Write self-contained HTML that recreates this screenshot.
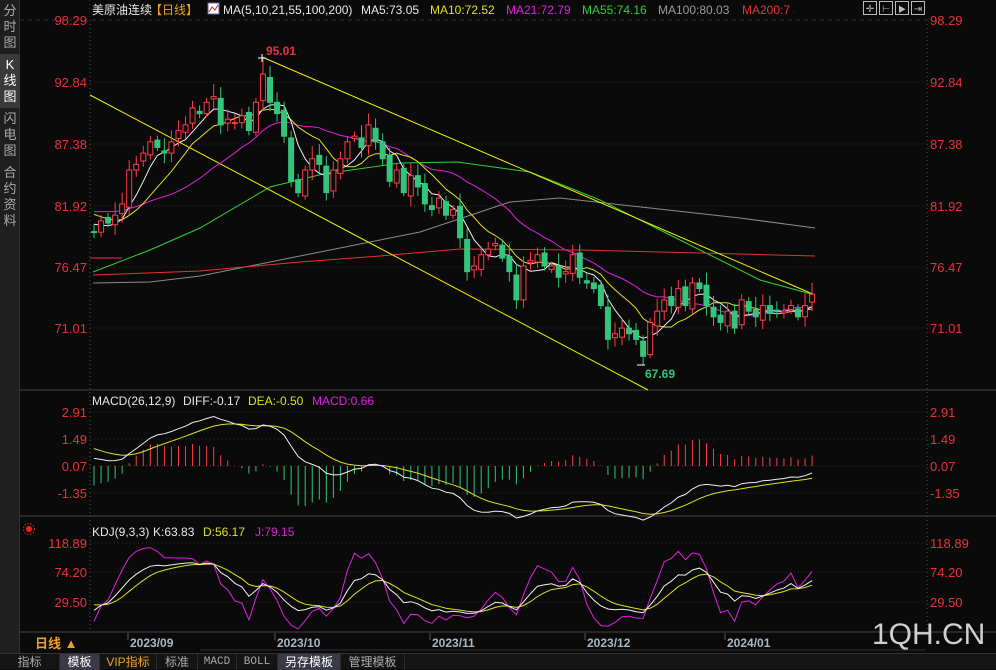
<!DOCTYPE html>
<html><head><meta charset="utf-8"><style>
*{margin:0;padding:0;box-sizing:border-box}
body{width:996px;height:669px;background:#0a0a0a;overflow:hidden;font-family:"Liberation Sans","Noto Sans CJK SC",sans-serif;position:relative}
.sb{position:absolute;left:0;top:0;width:20px;height:653px;background:#1e1e1e;border-right:1px solid #333}
.sb div{color:#aaa;font-size:13px;line-height:16px;text-align:center;width:20px;padding:3px 0}
.sb .on{background:#3a3a3a;color:#fff}
.tabs{position:absolute;left:0;top:653px;width:996px;height:16px;background:#141414;border-top:1px solid #333}
.tabs span{position:absolute;top:0;height:16px;font-size:12px;line-height:16px;text-align:center;color:#aaa;border-right:1px solid #2a2a2a}
svg{position:absolute;left:0;top:0}
</style></head><body>
<div class="sb"><div>分<br>时<br>图</div><div class="on">K<br>线<br>图</div><div>闪<br>电<br>图</div><div>合<br>约<br>资<br>料</div></div>
<svg id="s" width="996" height="653" viewBox="0 0 996 653" font-family="Liberation Sans, Noto Sans CJK SC, sans-serif"></svg>
<div class="tabs">
<span style="left:0;width:60px">指标</span>
<span style="left:60px;width:40px;background:#3a3a46;color:#fff">模板</span>
<span style="left:100px;width:57px;color:#f0a020">VIP指标</span>
<span style="left:157px;width:41px">标准</span>
<span style="left:198px;width:39px;font-family:'Liberation Mono',monospace;font-size:11px">MACD</span>
<span style="left:237px;width:41px;font-family:'Liberation Mono',monospace;font-size:11px">BOLL</span>
<span style="left:278px;width:63px;background:#3a3a46;color:#fff">另存模板</span>
<span style="left:341px;width:64px">管理模板</span>
</div>
<script>
var s=document.getElementById('s'),h='';
function L(x1,y1,x2,y2,c,d){h+='<line x1="'+x1+'" y1="'+y1+'" x2="'+x2+'" y2="'+y2+'" stroke="'+c+'" stroke-width="1"'+(d?' stroke-dasharray="'+d+'"':'')+'/>';}
function T(x,y,t,c,sz,a,w){h+='<text x="'+x+'" y="'+y+'" fill="'+c+'" font-size="'+(sz||12)+'"'+(a?' text-anchor="'+a+'"':'')+(w?' font-weight="bold"':'')+'>'+t+'</text>';}
function P(pts,c){h+='<polyline fill="none" stroke="'+c+'" stroke-width="1" points="'+pts.map(function(p){return p[0].toFixed(1)+','+p[1].toFixed(1)}).join(' ')+'"/>';}
L(90,0,90,632,'#555','1,3');L(927,20,927,632,'#555','1,3');
L(20,390,996,390,'#444');L(20,516,996,516,'#444');L(20,632,996,632,'#444');
L(20,20,927,20,'#333','4,4');
var R='#e8303a';
var pl=[[98.29,20],[92.84,82],[87.38,144],[81.92,206],[76.47,267],[71.01,328]];
pl.forEach(function(p){if(p[1]>20)L(90,p[1],927,p[1],'#333','1,3');T(87,p[1]+5,p[0].toFixed(2),R,13,'end');T(930,p[1]+5,p[0].toFixed(2),R,13);});
function py(p){return 20+(98.29-p)*11.29;}
var ml=[['2.91',412],['1.49',439],['0.07',466],['-1.35',493]];
ml.forEach(function(p){L(90,p[1],927,p[1],'#333','1,3');T(87,p[1]+5,p[0],R,13,'end');T(930,p[1]+5,p[0],R,13);});
var kl=[['118.89',543],['74.20',572],['29.50',602]];
kl.forEach(function(p){L(90,p[1],927,p[1],'#333','1,3');T(87,p[1]+5,p[0],R,13,'end');T(930,p[1]+5,p[0],R,13);});
var C=[79.5,80.5,80.3,81,82,85,85.5,86.5,87.5,87,86.5,87.5,88.5,89,90.5,90,91,91.5,89,89.5,89.2,89.8,88.5,91,93.5,91,90,88,84,83,85,86,85.5,83,85,86,87.5,88,87,89,87.5,86,84,85,83,84.5,83.5,82,81.5,82.5,81,81.5,79,76,76.5,77.5,78,78.5,77.2,76,73.5,76.5,77,77.5,76.5,76.5,75.5,76,77.5,75.5,75,74.5,73,70,70.5,71,70.5,70,68.5,71.5,72.5,73.5,73,74.5,73,75,74.5,73,72,71.5,72.5,71,73.5,72.5,72,73,72.3,72.5,72.5,73,72,73,74];
var pre=[];for(var i=0;i<40;i++){pre.push(i<30?74+i*0.3:83-(i-30)*0.35);}
var all=pre.concat(C),n=C.length,np=pre.length;
var O=[],H=[],Lo=[];
for(i=0;i<all.length;i++){var o=i?all[i-1]+((i*7)%5-2)*0.15:all[i];O.push(o);var sp=0.4+((i*13)%7)*0.12;H.push(Math.max(o,all[i])+sp);Lo.push(Math.min(o,all[i])-sp*0.8);}
H[np+24]=95.01;Lo[np+78]=67.69;
var dx=7.04,x0=94;function bx(k){return x0+k*dx;}
function ma(p){var r=[];for(var k=0;k<n;k++){var s2=0;for(var j=0;j<p;j++)s2+=all[np+k-j];r.push([bx(k),py(s2/p)]);}return r;}
P([[93,272],[150,250],[200,228],[270,187],[323,174],[400,163],[457,162],[530,172],[600,200],[650,225],[700,250],[760,280],[815,295]],'#30d030');
P([[93,283],[150,282],[200,276],[300,256],[420,232],[510,202],[560,198],[650,208],[740,218],[815,228]],'#8a8a8a');
P([[93,275],[200,271],[300,262],[380,256],[460,249],[580,250],[700,253],[815,256]],'#e83030');
L(90,258,122,258,'#ff2060');
L(262,57,815,295,'#f0f000');L(90,95,648,390,'#f0f000');
P(ma(21),'#e020e0');P(ma(10),'#e0e020');P(ma(5),'#f0f0f0');
for(var k=0;k<n;k++){var j=np+k,x=bx(k),o=O[j],c=all[j],up=c>=o,col=up?'#ff3a4a':'#34c47c';
L(x,py(H[j]),x,py(Lo[j]),col);
var t=py(Math.max(o,c)),b=py(Math.min(o,c));if(b-t<1)b=t+1;
h+='<rect x="'+(x-2.5)+'" y="'+t+'" width="5" height="'+(b-t)+'" fill="'+(up?'#0a0a0a':col)+'" stroke="'+col+'"/>';}
T(266,55,'95.01',R,12,null,1);L(258,58,266,58,'#fff');L(262,54,262,62,'#fff');
T(645,378,'67.69','#34c47c',12,null,1);L(637,365,645,365,'#fff');
function ema(a,p){var r=[a[0]],al=2/(p+1);for(var q=1;q<a.length;q++)r.push(r[q-1]+al*(a[q]-r[q-1]));return r;}
var e12=ema(all,12),e26=ema(all,26),dif=[],q;for(q=0;q<all.length;q++)dif.push(e12[q]-e26[q]);
var dea=ema(dif,9);
function my(v){return 466-(v-0.07)*19;}
var dp=[],ep=[];
for(k=0;k<n;k++){j=np+k;var m=2*(dif[j]-dea[j]);L(bx(k),466,bx(k),my(m+0.07),m>=0?'#ff3a4a':'#34c47c');dp.push([bx(k),my(dif[j])]);ep.push([bx(k),my(dea[j])]);}
P(ep,'#e0e020');P(dp,'#f0f0f0');
var K=50,D=50,kp=[],dpp=[],jp=[];
function ky(v){return Math.min(632,602-(v-29.5)*0.6577);}
for(q=0;q<all.length;q++){var hh=-1e9,ll=1e9;for(var z=Math.max(0,q-8);z<=q;z++){hh=Math.max(hh,H[z]);ll=Math.min(ll,Lo[z]);}
var rsv=(all[q]-ll)/(hh-ll)*100;K=2/3*K+rsv/3;D=2/3*D+K/3;var J=3*K-2*D;
if(q>=np){var x=bx(q-np);kp.push([x,ky(K)]);dpp.push([x,ky(D)]);jp.push([x,ky(J)]);}}
P(jp,'#e020e0');P(dpp,'#e0e020');P(kp,'#f0f0f0');
h+='<rect x="90" y="0" width="837" height="18" fill="#0a0a0a"/>';
T(92,14,'美原油连续','#e8e8e8',12);T(150,14,'【日线】','#f0a020',12);
h+='<rect x="208" y="3" width="11" height="11" fill="#fff" stroke="#66a"/><polyline points="209,12 212,7 215,10 218,5" fill="none" stroke="#d22" />';
T(223,14,'MA(5,10,21,55,100,200)','#e8e8e8',12);T(361,14,'MA5:73.05','#e8e8e8',12);T(430,14,'MA10:72.52','#e0e020',12);T(506,14,'MA21:72.79','#e020e0',12);T(582,14,'MA55:74.16','#30d030',12);T(658,14,'MA100:80.03','#9a9a9a',12);T(742,14,'MA200:7','#e83030',12);
for(i=0;i<4;i++)h+='<rect x="'+(863.5+i*16)+'" y="1.5" width="13" height="13" fill="none" stroke="#bbb"/>';
T(863.5+6.5,12,'✛','#bbb',10,'middle');T(879.5+6.5,12,'⊢','#bbb',9,'middle');T(895.5+6.5,12,'▶','#bbb',8,'middle');T(911.5+6.5,12,'⇥','#bbb',10,'middle');
T(92,405,'MACD(26,12,9)','#e8e8e8',12);T(183,405,'DIFF:-0.17','#e8e8e8',12);T(248,405,'DEA:-0.50','#e0e020',12);T(312,405,'MACD:0.66','#e020e0',12);
T(92,536,'KDJ(9,3,3)','#e8e8e8',12);T(153,536,'K:63.83','#e8e8e8',12);T(203,536,'D:56.17','#e0e020',12);T(255,536,'J:79.15','#e020e0',12);
h+='<circle cx="29" cy="529" r="3" fill="#f02020"/><circle cx="29" cy="529" r="5.5" fill="none" stroke="#f02020" stroke-dasharray="1.5,1.5"/>';
T(35,648,'日线 ▲','#f0a020',13,null,1);
[['2023/09',130],['2023/10',277],['2023/11',432],['2023/12',587],['2024/01',727]].forEach(function(d){L(d[1]-2,633,d[1]-2,640,'#555');T(d[1],647,d[0],'#a8b8c8',12,null,1);});
L(200,650,925,650,'#333');
T(872,644,'1QH.CN','#d0d0d0',30);
s.innerHTML=h;
</script>
</body></html>
